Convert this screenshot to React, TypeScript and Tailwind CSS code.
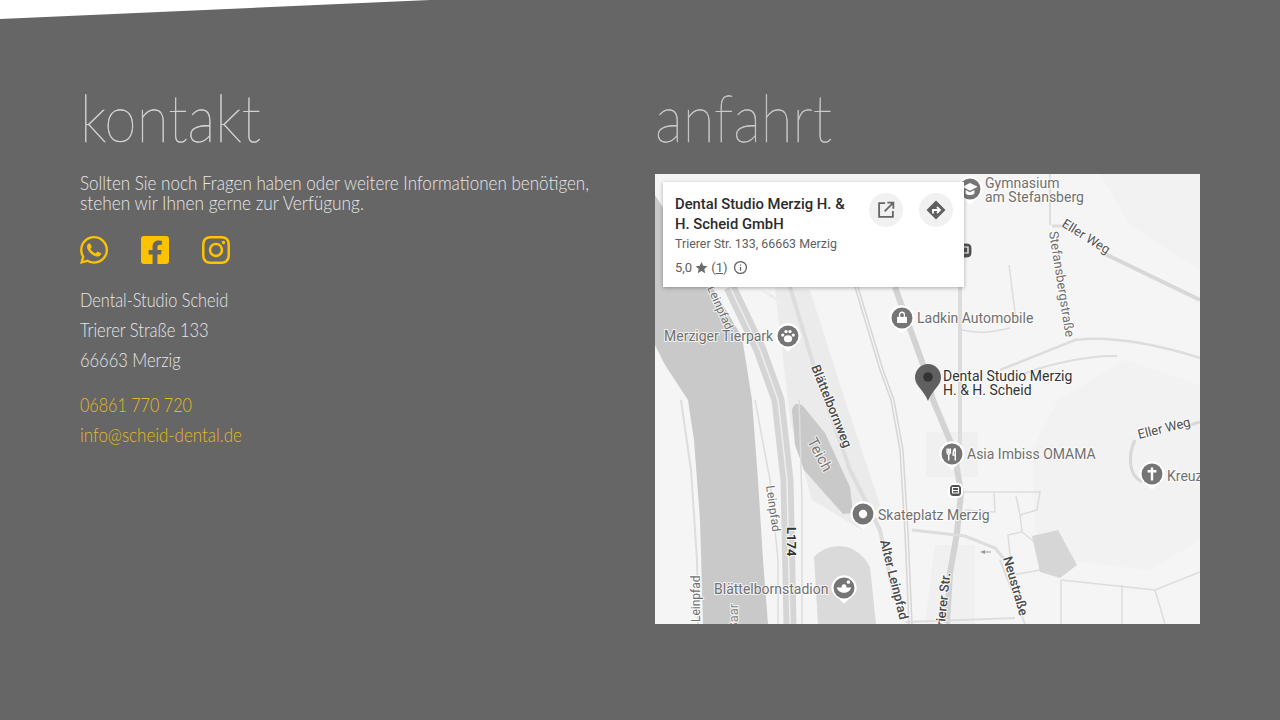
import { FaWhatsapp, FaFacebookSquare, FaInstagram } from "react-icons/fa";
import type { ReactNode } from "react";

const FONT = "font-['Lato','Liberation_Sans',sans-serif]";

function Pin({ x, y, children, dark = "#757575" }: { x: number; y: number; children?: ReactNode; dark?: string }) {
  return (
    <g transform={`translate(${x} ${y}) scale(1.1)`}>
      <path d="M-11.5 0a11.5 11.5 0 1 1 23 0c0 5-4 8-7 10l-4.500 4-4.500-4c-3-2-7-5-7-10z" fill="#fff" />
      <circle r="9.5" fill={dark} />
      {children}
    </g>
  );
}

function T({ x, y, s, r = 0, size = 14, fill = "#707070", w = 400 }: { x: number; y: number; s: string; r?: number; size?: number; fill?: string; w?: number }) {
  return (
    <text
      x={x}
      y={y}
      transform={r ? `rotate(${r} ${x} ${y})` : undefined}
      fontSize={size}
      fontWeight={w}
      fill={fill}
      fontFamily="Roboto, sans-serif"
      stroke="#ffffff"
      strokeOpacity="0.75"
      strokeWidth="2"
      paintOrder="stroke"
    >
      {s}
    </text>
  );
}

function MapDrawing() {
  return (
    <svg viewBox="655 174 545 450" className="block w-full h-full">
      <rect x="655" y="174" width="545" height="450" fill="#f5f5f5" />
      {/* soft areas */}
      <path d="M1058 400L1125 360 1200 385V540L1150 570 1060 560 1035 530 1032 450z" fill="#f2f2f2" />
      <path d="M1100 174L1200 174V270L1130 225z" fill="#f2f2f2" />
      <path d="M926 432H978V477H926z" fill="#f0f0f0" />
      <path d="M935 545H975V624H925z" fill="#f0f0f0" />
      {/* river */}
      <path d="M655 195L690 250 712 287 742 337 752 400 758 480 763 560 768 624H703L700 520 694 440 688 400 665 365 655 345z" fill="#c9c9c9" />
      {/* river banks and paths */}
      <path d="M681 400L691 470 697 560 698 624" fill="none" stroke="#dddddd" strokeWidth="2" />
      <path d="M755 400L770 480 778 560 778 624" fill="none" stroke="#dddddd" strokeWidth="1.5" />
      {/* land wedge beside L174 */}
      <path d="M775 287L810 290 845 400 880 505 862 530 812 500 790 420z" fill="#ebebeb" />
      {/* pond */}
      <path d="M792 410C794 403 798 403 803 406L825 433 850 487 853 513 843 514 804 470 795 445z" fill="#c9c9c9" />
      {/* stadium */}
      <path d="M814 557C825 544 855 538 870 567L876 624H818z" fill="#dadada" />
      <path d="M760 290C790 295 800 340 775 300z" fill="#ececec" />
      {/* L174 */}
      <path d="M730 287L760 350 778 400 787 480 790 624" fill="none" stroke="#d5d5d5" strokeWidth="13" />
      <path d="M730 287L760 350 778 400 787 480 790 624" fill="none" stroke="#eeeeee" strokeWidth="1.5" />
      <path d="M799 400L802 500 802 624" fill="none" stroke="#dcdcdc" strokeWidth="1.5" />
      {/* Blättelbornweg + Alter Leinpfad */}
      <path d="M790 287L815 370 850 470 880 530 895 600" fill="none" stroke="#dddddd" strokeWidth="4" />
      {/* rail */}
      <path d="M855 287L880 370 891 400 900 450 905 533 909 624" fill="none" stroke="#d6d6d6" strokeWidth="1.5" />
      <path d="M858 287L883 370 894 400 903 450 908 533 912 624" fill="none" stroke="#d6d6d6" strokeWidth="1.5" />
      {/* Trierer Str */}
      <path d="M895 287L925 370 933 400 954 450 961 493 957 533 950 573 947 624" fill="none" stroke="#d3d3d3" strokeWidth="6" />
      <path d="M960 287V450" fill="none" stroke="#dcdcdc" strokeWidth="4" />
      {/* side streets */}
      <path d="M962 330C985 335 1000 330 1010 328" fill="none" stroke="#dddddd" strokeWidth="1.5" />
      <path d="M1009 265L1016 320" fill="none" stroke="#dddddd" strokeWidth="1.5" />
      <path d="M1000 370L1075 340C1110 335 1160 345 1200 358" fill="none" stroke="#dddddd" strokeWidth="2.5" />
      <path d="M1015 378C1040 365 1090 355 1117 356" fill="none" stroke="#dddddd" strokeWidth="2" />
      <path d="M1050 174V225" fill="none" stroke="#dddddd" strokeWidth="2" />
      <path d="M1052 226H1070" fill="none" stroke="#dddddd" strokeWidth="3" />
      <path d="M1105 254L1200 300" fill="none" stroke="#d8d8d8" strokeWidth="4" />
      <path d="M912 530L965 536 995 548 1005 560" fill="none" stroke="#dddddd" strokeWidth="3" />
      <path d="M1000 560L1025 624" fill="none" stroke="#dddddd" strokeWidth="2" />
      <path d="M906 622L1015 618" fill="none" stroke="#dddddd" strokeWidth="2" />
      <path d="M1135 440C1128 455 1128 475 1142 482" fill="none" stroke="#d8d8d8" strokeWidth="3" />
      <path d="M1190 425L1200 422" fill="none" stroke="#d8d8d8" strokeWidth="3" />
      {/* plots */}
      <path d="M960 492H1040L1037 510 1020 515 1016 496M994 492L995 512 965 510M1020 515L1022 532 1008 535 1012 575 1040 570 1042 548 1022 532" fill="none" stroke="#dddddd" strokeWidth="1.5" />
      <path d="M1061 580L1155 590 1200 572M1061 580V624M1122 585V624M1155 590L1165 624" fill="none" stroke="#dddddd" strokeWidth="1.5" />
      <path d="M1032 536L1058 530 1077 565 1060 578 1040 572z" fill="#d6d6d6" />

      {/* labels */}
      <T x={707} y={288} r={66} s="Leinpfad" size={12} />
      <T x={664} y={341} s="Merziger Tierpark" />
      <T x={917} y={323} s="Ladkin Automobile" />
      <T x={985} y={188} s="Gymnasium" />
      <T x={985} y={202} s="am Stefansberg" />
      <T x={1049} y={232} r={81} s="Stefansbergstraße" size={13} />
      <T x={1061} y={226} r={32} s="Eller Weg" size={13} fill="#555555" />
      <T x={943} y={381} s="Dental Studio Merzig" fill="#333333" />
      <T x={943} y={395} s="H. & H. Scheid" fill="#333333" />
      <T x={811} y={367} r={68} s="Blättelbornweg" size={13} fill="#4a4a4a" w={500} />
      <T x={807} y={441} r={62} s="Teich" size={15} fill="#777777" />
      <T x={967} y={459} s="Asia Imbiss OMAMA" />
      <T x={1139} y={439} r={-14} s="Eller Weg" size={13} fill="#4f4f4f" />
      <T x={1167} y={481} s="Kreuz" />
      <T x={878} y={520} s="Skateplatz Merzig" />
      <T x={766} y={486} r={82} s="Leinpfad" size={12} />
      <T x={787} y={527} r={90} s="L174" size={13} fill="#333333" w={700} />
      <T x={880} y={541} r={76} s="Alter Leinpfad" size={13} fill="#4a4a4a" w={500} />
      <T x={944} y={634} r={-84} s="Trierer Str." size={13} fill="#4a4a4a" w={500} />
      <T x={1003} y={558} r={74} s="Neustraße" size={13} fill="#4a4a4a" w={500} />
      <T x={714} y={594} s="Blättelbornstadion" />
      <T x={700} y={622} r={-90} s="Leinpfad" size={12} />
      <T x={738} y={630} r={-90} s="Saar" size={13} fill="#888888" />

      {/* pins */}
      <Pin x={788} y={336}>
        <ellipse cx="0" cy="2.5" rx="3.8" ry="3.2" fill="#fff" />
        <circle cx="-4.8" cy="-.8" r="1.5" fill="#fff" /><circle cx="-1.8" cy="-4" r="1.5" fill="#fff" /><circle cx="1.8" cy="-4" r="1.5" fill="#fff" /><circle cx="4.8" cy="-.8" r="1.5" fill="#fff" />
      </Pin>
      <Pin x={902} y={318}>
        <path d="M-2.2-1V-3a2.2 2.200 0 0 1 4.400 0V-1" fill="none" stroke="#fff" strokeWidth="1.2" />
        <path d="M-4.500-1H4.500V4.500H-4.500z" fill="#fff" />
      </Pin>
      <Pin x={952} y={454}>
        <path d="M-4.5-5V-1.5C-4.5 0-3.500 0-3 .5V6M-3-5V-1M-1.5-5V-1.5C-1.5 0-2.500 0-3 .5M3-5C1-4 1-1 1 1H3M3-5V6" fill="none" stroke="#fff" strokeWidth="1.3" />
      </Pin>
      <Pin x={1152} y={474}>
        <path d="M0-6V6M-4-2.500H4" stroke="#fff" strokeWidth="2.2" />
      </Pin>
      <Pin x={863} y={514}>
        <circle r="3.8" fill="#fff" />
      </Pin>
      <Pin x={844} y={588}>
        <path d="M-6.500-.5C-5 6 5 6 6.500-.5zM0-3.500a2.200 2.200 0 1 0 .1 0M4-7a1.600 1.600 0 1 0 .1 0" fill="#fff" />
      </Pin>
      <Pin x={970} y={189}>
        <path d="M-7-2L0-5.500 7-2 0 1.500zM-4 1V4C-2 6 2 6 4 4V1L0 3z" fill="#fff" />
      </Pin>
      <rect x="948" y="483" width="15" height="15" rx="5" fill="#fff" />
      <rect x="950" y="485" width="11" height="11" rx="3.5" fill="#505050" />
      <path d="M952.500 487.500H958.500V493H952.500zM952.500 490.500H958.500" fill="none" stroke="#fff" strokeWidth="1.2" />
      <rect x="958" y="243" width="14" height="15" rx="5" fill="#505050" stroke="#fff" />
      <path d="M962 247H968V253H962z" fill="none" stroke="#fff" strokeWidth="1.2" />
      <path d="M980 552l5-2v1.500h6v1h-6V554z" fill="#9a9a9a" />
      <path d="M928 401C924 390 915 386 915 377.500a13 13.500 0 0 1 26 0C941 386 932 390 928 401z" fill="#606060" />
      <circle cx="928" cy="377" r="4.800" fill="#333333" />
    </svg>
  );
}

function InfoCard() {
  return (
    <div className="absolute left-2 top-2 w-[301px] h-[105px] bg-white shadow-[0_1px_4px_rgba(0,0,0,0.3)] pl-3 pr-[11px] pt-3 flex font-['Roboto',sans-serif]">
      <div className="flex-1 min-w-0">
        <div className="w-[180px] text-[14.8px] leading-[20px] font-medium text-[#2b2b2b]">Dental Studio Merzig H. &amp; H. Scheid GmbH</div>
        <div className="mt-[1px] text-[12.4px] leading-[17px] text-[#5f5f5f] whitespace-nowrap">Trierer Str. 133, 66663 Merzig</div>
        <div className="mt-[7px] flex items-center text-[13px] leading-[17px] text-[#5f5f5f]">
          <span>5,0</span>
          <svg viewBox="0 0 24 24" className="ml-[2px] w-[15px] h-[15px]"><path fill="#6b6b6b" d="M12 3l2.800 6.200 6.700.7-5 4.500 1.400 6.600L12 17.600 6.100 21l1.400-6.600-5-4.500 6.700-.7z" /></svg>
          <span className="ml-[2px]">(<span className="underline">1</span>)</span>
          <svg viewBox="0 0 24 24" className="ml-[6px] w-[15px] h-[15px]"><circle cx="12" cy="12" r="9.5" fill="none" stroke="#5f5f5f" strokeWidth="2" /><path d="M12 11v6M12 7v2" stroke="#5f5f5f" strokeWidth="2" /></svg>
        </div>
      </div>
      <div className="flex gap-4 -mt-[1px]">
        <div className="w-[34px] h-[34px] rounded-full bg-[#f1f1f1] flex items-center justify-center">
          <svg viewBox="0 0 24 24" className="w-[22px] h-[22px]"><path fill="none" stroke="#666666" strokeWidth="2" d="M11 4.500H4.500v15h15V13M13.500 4H20v6.500M20 4l-9.500 9.500" /></svg>
        </div>
        <div className="w-[34px] h-[34px] rounded-full bg-[#f1f1f1] flex items-center justify-center">
          <svg viewBox="0 0 24 24" className="w-[24px] h-[24px]"><path fill="#5f5f5f" d="M12 2.500l9.500 9.500-9.500 9.500L2.500 12z" /><path fill="none" stroke="#fff" strokeWidth="1.800" d="M9 15.500v-3.500h6M13 9l3 3-3 3" /></svg>
        </div>
      </div>
    </div>
  );
}

export default function App() {
  return (
    <div className={`w-[1280px] h-[720px] bg-[#666666] overflow-hidden ${FONT}`}>
      <div className="w-[430px] h-[19px] bg-white [clip-path:polygon(0_0,100%_0,0_100%)]" />
      <div className="flex pl-20 pt-[58px]">
        <div className="w-[575px]">
          <h2 className="text-[66px] leading-[80px] font-thin text-[#d2d2d2] origin-left scale-x-[0.89] [-webkit-text-stroke:0.6px_#d2d2d2]">kontakt</h2>
          <div className="mt-[15px] text-[20px] leading-[20px] font-light text-[#e6e6e6] whitespace-nowrap">
            <p className="origin-left scale-x-[0.852]">Sollten Sie noch Fragen haben oder weitere Informationen benötigen,</p>
            <p className="origin-left scale-x-[0.864]">stehen wir Ihnen gerne zur Verfügung.</p>
          </div>
          <div className="mt-[22px] -ml-[2px] flex gap-[29px] text-[#fdc300] text-[32px]">
            <FaWhatsapp />
            <FaFacebookSquare />
            <FaInstagram />
          </div>
          <div className="mt-[18px] text-[20px] leading-[30px] font-light text-[#e6e6e6] whitespace-nowrap">
            <div className="origin-left scale-x-[0.815]">Dental-Studio Scheid</div>
            <div className="origin-left scale-x-[0.828]">Trierer Straße 133</div>
            <div className="origin-left scale-x-[0.823]">66663 Merzig</div>
          </div>
          <div className="mt-[15px] text-[20px] leading-[30px] font-light text-[#e6b91e] whitespace-nowrap">
            <div className="origin-left scale-x-[0.808]">06861 770 720</div>
            <div className="origin-left scale-x-[0.847]">info@scheid-dental.de</div>
          </div>
        </div>
        <div className="w-[545px]">
          <h2 className="text-[66px] leading-[80px] font-thin text-[#c8c8c8] origin-left scale-x-[0.886] [-webkit-text-stroke:0.6px_#c8c8c8]">anfahrt</h2>
          <div className="relative mt-[17px] w-[545px] h-[450px]">
            <MapDrawing />
            <InfoCard />
          </div>
        </div>
      </div>
    </div>
  );
}
